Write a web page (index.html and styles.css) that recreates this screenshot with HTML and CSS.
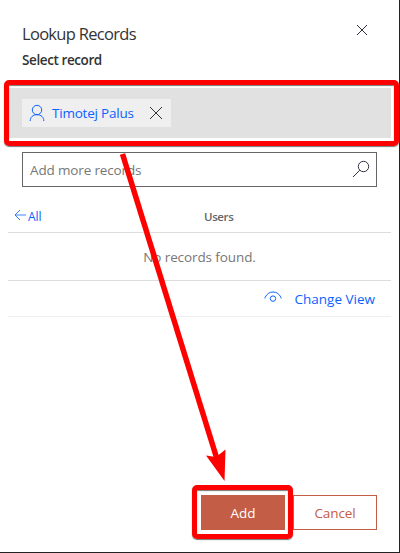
FILE: index.html
```html
<!DOCTYPE html>
<html lang="en">
<head>
<meta charset="utf-8">
<title>Lookup Records</title>
<link rel="stylesheet" href="styles.css">
</head>
<body>
<main class="panel">
  <header class="header">
    <div>
      <h1 class="title"><span>Lookup Records</span></h1>
      <p class="subtitle">Select record</p>
    </div>
    <svg class="close" viewBox="0 0 12 12"><path d="M1 1L11 11M11 1L1 11"/></svg>
  </header>
  <section class="selected">
    <div class="chip">
      <svg class="person" viewBox="0 0 16 18"><circle cx="8" cy="6" r="4.7"/><path d="M1.2 17C1.2 13 4 10.7 8 10.7S14.8 13 14.8 17"/></svg>
      <span class="name">Timotej Palus</span>
      <svg class="remove" viewBox="0 0 14 14"><path d="M1 1L13 13M13 1L1 13"/></svg>
    </div>
  </section>
  <div class="search">
    <span class="placeholder">Add more records</span>
    <svg class="magnifier" viewBox="0 0 18 18"><circle cx="11.5" cy="6.5" r="5.2"/><path d="M7.8 10.2L1 17"/></svg>
  </div>
  <nav class="tabs">
    <span class="back"><svg viewBox="0 0 12 12"><path d="M6 1L1 6L6 11M1 6H12"/></svg><span>All</span></span>
    <span class="users">Users</span>
  </nav>
  <p class="empty"><span>No records found.</span></p>
  <div class="view">
    <svg viewBox="0 0 18 12"><path d="M1 7.5V6.5C3 2.7 5.5 1 9 1S15.2 2.7 17 6.5V7.5"/><circle cx="9" cy="7.6" r="2.7"/></svg>
    <span>Change View</span>
  </div>
  <footer class="actions">
    <button class="add">Add</button>
    <button class="cancel">Cancel</button>
  </footer>
</main>
<div class="mark mark-record"></div>
<div class="mark mark-add"></div>
<svg class="pointer" viewBox="0 0 400 553"><path d="M122.500 154L217 459"/><polygon points="224.500,481 206,455.500 216,457 225.500,449.500"/></svg>
</body>
</html>
```
FILE: styles.css
```css
* { box-sizing: border-box; }
body {
  margin: 0;
  width: 400px;
  height: 553px;
  overflow: hidden;
  background: #fff;
  color: #333;
  font: 13.500px "Open Sans", "Noto Sans", sans-serif;
}
svg { display: block; fill: none; stroke: currentColor; stroke-width: 1; flex: none; }
h1, p { margin: 0; white-space: nowrap; }
.panel {
  height: 553px;
  display: flex;
  flex-direction: column;
  border-right: 1px solid #222;
  border-bottom: 1px solid #222;
}
.header { height: 88px; padding: 22px 31px 0 22px; display: flex; justify-content: space-between; }
.title { font-size: 16.500px; line-height: 24px; font-weight: 400; letter-spacing: -.7px; }
.subtitle { margin-top: 4px; font-size: 13.500px; line-height: 20px; font-weight: 600; letter-spacing: -.4px; }
.close { width: 12px; height: 12px; margin-top: 2px; color: #323040; }
.selected { height: 50px; margin: 0 8px 0 9px; padding: 11px 13px; background: #e1e1e1; }
.chip { width: 149px; height: 28px; padding: 0 8px 0 7px; display: flex; align-items: center; background: #efefef; color: #0b62ff; white-space: nowrap; }
.person { width: 16px; height: 18px; }
.name { width: 97px; margin-left: 7px; letter-spacing: -.22px; }
.remove { width: 14px; height: 14px; color: #333; }
.search { height: 35px; margin: 14px 22px 0; padding: 0 6px 0 7px; border: 1px solid #666; display: flex; align-items: center; justify-content: space-between; color: #777; }
.placeholder { letter-spacing: -.15px; }
.magnifier { width: 18px; height: 18px; margin-bottom: 2px; color: #303040; }
.tabs { height: 46px; margin: 0 8px; padding-top: 14px; display: flex; align-items: center; border-bottom: 1px solid #ddd; font-size: 12px; }
.back { width: 196px; padding-left: 6px; display: flex; align-items: center; gap: 2px; color: #0b62ff; }
.back svg { width: 12px; height: 12px; margin-bottom: 3px; stroke-width: .8; }
.users { font-weight: 600; font-size: 11.500px; letter-spacing: -.4px; color: #666; }
.empty { height: 48px; margin: 0 8px; border-bottom: 1px solid #ddd; line-height: 48px; text-align: center; color: #777; letter-spacing: -.1px; }
.view { height: 36px; margin: 0 8px; padding-right: 16px; display: flex; align-items: center; justify-content: flex-end; gap: 13px; border-bottom: 1px solid #eee; color: #0b62ff; }
.view svg { width: 18px; height: 12px; margin-bottom: 3px; }
.actions { margin-top: auto; padding: 0 22px 22px; display: flex; justify-content: flex-end; gap: 8px; }
.actions button { width: 84px; height: 35px; padding: 0; border: 1px solid #c45d46; border-radius: 0; font: 13.500px "Open Sans", "Noto Sans", sans-serif; letter-spacing: -.1px; }
.actions .add { background: #c45d46; color: #fff; font-weight: 500; }
.actions .cancel { background: #fff; color: #c45d46; }
.mark { position: absolute; border: 5px solid #f00; border-radius: 5px; box-shadow: 0 1px 1px #777, inset 0 1px 1px #777; }
.mark-record { left: 4px; top: 80px; width: 395px; height: 66px; }
.mark-add { left: 192px; top: 485px; width: 101px; height: 54px; }
.pointer { position: absolute; left: 0; top: 0; width: 400px; height: 553px; color: #f00; stroke-width: 5.500; }
.pointer polygon { fill: #f00; stroke: none; }
```
